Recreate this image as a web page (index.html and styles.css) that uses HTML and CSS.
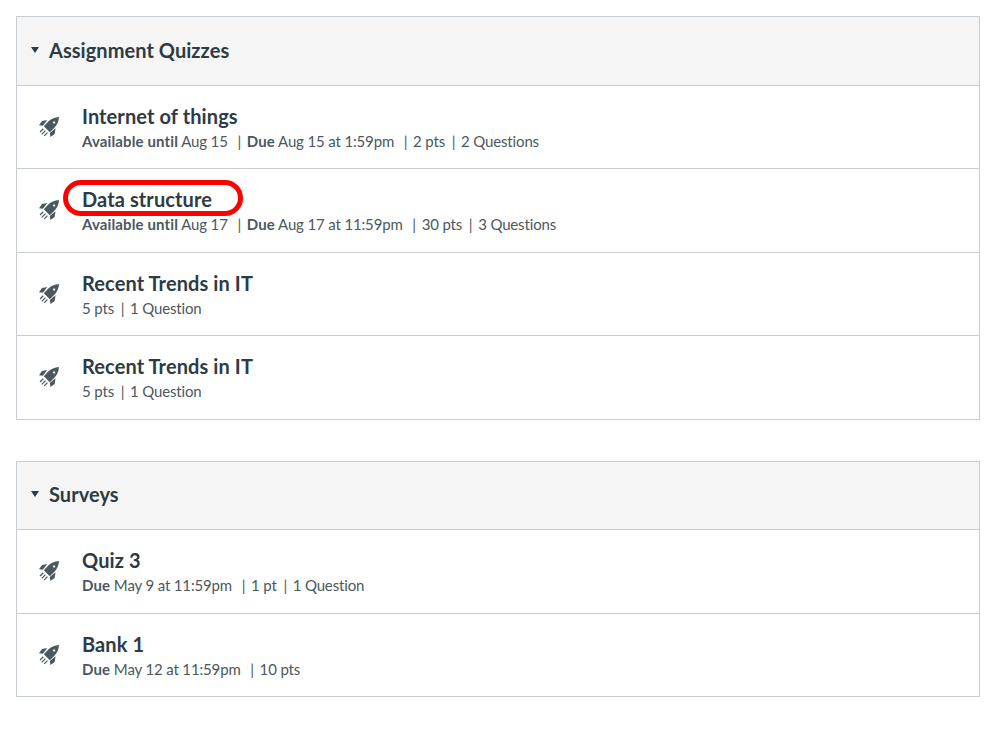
FILE: index.html
```html
<!DOCTYPE html>
<html lang="en">
<head>
    <title>Quizzes</title>
    <link rel="stylesheet" href="styles.css">
</head>
<body>
    <svg class="defs" width="0" height="0">
        <symbol id="rocket" viewBox="0 0 20 20">
            <path fill-rule="evenodd" d="M20 0c-4.600.3-8 1.900-10.700 4.600L4.800 9.200l6 6 4.600-4.500C18.100 8 19.700 4.600 20 0zM14.300 4.700a1.100 1.100 0 1 1 1.600 1.600 1.100 1.100 0 0 1-1.600-1.600z"/>
            <path d="M8.300 3.100 3 3.900 0 8.200l3.900.6z"/>
            <path d="M16.500 11.300 15.700 17 11.400 20l-.6-4z"/>
            <path d="M3.800 11.300 4.700 12.200 1.500 15.400.6 14.500zM6 13.200 6.900 14.100 3.200 17.800 2.300 16.900zM8 15.200 8.900 16.100 5.700 19.300 4.800 18.400z"/>
        </symbol>
    </svg>

    <section class="group">
        <h2 class="group-head"><span class="caret"></span>Assignment Quizzes</h2>
        <div class="row">
            <svg class="icon"><use href="#rocket"/></svg>
            <div class="info">
                <a class="title">Internet of things</a>
                <p class="meta"><b>Available until</b> Aug 15 <i class="sep wide">|</i> <b>Due</b> Aug 15 at 1:59pm <i class="sep wide">|</i> 2 pts <i class="sep">|</i> 2 Questions</p>
            </div>
        </div>
        <div class="row tall">
            <svg class="icon"><use href="#rocket"/></svg>
            <div class="info">
                <a class="title circled">Data structure</a>
                <p class="meta"><b>Available until</b> Aug 17 <i class="sep wide">|</i> <b>Due</b> Aug 17 at 11:59pm <i class="sep wide">|</i> 30 pts <i class="sep">|</i> 3 Questions</p>
            </div>
        </div>
        <div class="row">
            <svg class="icon"><use href="#rocket"/></svg>
            <div class="info">
                <a class="title">Recent Trends in IT</a>
                <p class="meta">5 pts <i class="sep">|</i> 1 Question</p>
            </div>
        </div>
        <div class="row tall">
            <svg class="icon"><use href="#rocket"/></svg>
            <div class="info">
                <a class="title">Recent Trends in IT</a>
                <p class="meta">5 pts <i class="sep">|</i> 1 Question</p>
            </div>
        </div>
    </section>

    <section class="group">
        <h2 class="group-head short"><span class="caret"></span>Surveys</h2>
        <div class="row tall">
            <svg class="icon"><use href="#rocket"/></svg>
            <div class="info">
                <a class="title">Quiz 3</a>
                <p class="meta"><b>Due</b> May 9 at 11:59pm <i class="sep wide">|</i> 1 pt <i class="sep">|</i> 1 Question</p>
            </div>
        </div>
        <div class="row">
            <svg class="icon"><use href="#rocket"/></svg>
            <div class="info">
                <a class="title">Bank 1</a>
                <p class="meta"><b>Due</b> May 12 at 11:59pm <i class="sep wide">|</i> 10 pts</p>
            </div>
        </div>
    </section>
</body>
</html>
```

FILE: styles.css
```css
body {
    font-family: Lato, "Liberation Sans", sans-serif;
    margin: 0;
    padding: 16px 27px 0 16px;
    background-color: #fff;
    color: #2d3b45;
}

.defs {
    position: absolute;
}

.group {
    border: 1px solid #c7cdd1;
    border-bottom: none;
    margin-bottom: 41px;
}

.group-head {
    display: flex;
    align-items: center;
    box-sizing: border-box;
    height: 69px;
    margin: 0;
    padding: 0 0 3px 14px;
    background-color: #f5f5f5;
    border-bottom: 1px solid #c7cdd1;
    font-size: 20px;
    font-weight: 700;
    letter-spacing: 0.05px;
}

.group-head.short {
    height: 68px;
}

.caret {
    width: 0;
    height: 0;
    margin-right: 10px;
    border-left: 4.500px solid transparent;
    border-right: 4.500px solid transparent;
    border-top: 6px solid #2d3b45;
}

.row {
    display: flex;
    align-items: flex-start;
    height: 82px;
    border-bottom: 1px solid #c7cdd1;
}

.row.tall {
    height: 83px;
}

.icon {
    flex: none;
    width: 20px;
    height: 20px;
    margin: 31px 23px 0 22px;
    fill: #4c5860;
}

.info {
    padding-top: 17px;
}

.title {
    position: relative;
    display: block;
    font-size: 20px;
    font-weight: 700;
    line-height: 26px;
    letter-spacing: 0.1px;
    width: fit-content;
}

.circled::after {
    content: "";
    position: absolute;
    left: -19px;
    top: -6px;
    width: 170px;
    height: 26px;
    border: 5px solid #f00;
    border-radius: 18px;
}

.meta {
    margin: 0;
    font-size: 15px;
    line-height: 24px;
    letter-spacing: -0.15px;
    color: #4c5860;
}

.meta b {
    font-weight: 700;
    letter-spacing: 0.13px;
}

.sep {
    font-style: normal;
    margin: 0 2px 0 3px;
}

.sep.wide {
    margin: 0 2px 0 6px;
}
```
